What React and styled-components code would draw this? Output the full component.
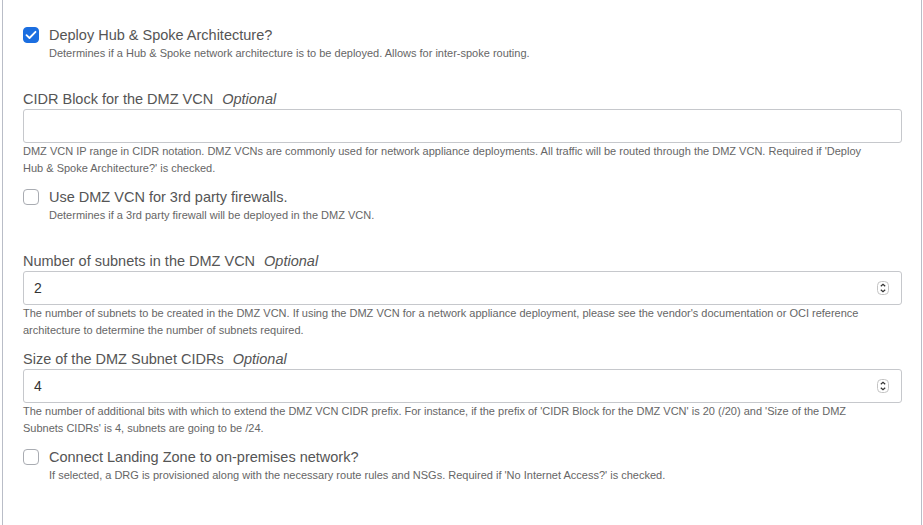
import React from "react";
import styled, { createGlobalStyle } from "styled-components";

const Global = createGlobalStyle`
  html, body { margin: 0; padding: 0; background: #fff; }
  body { font-family: "Liberation Sans", Arial, Helvetica, sans-serif; }
  * { box-sizing: border-box; }
`;

const Panel = styled.div`
  margin-left: 2px;
  width: 920px;
  min-height: 100vh;
  border-left: 1px solid #b9bdc7;
  border-right: 1px solid #b9bdc7;
  padding: 25px 19px 0 20px;
`;

const CheckBlock = styled.div`
  margin-bottom: ${(p) => p.$mb ?? 10}px;
`;

const CheckRow = styled.label`
  display: flex;
  align-items: center;
  gap: 10px;
  height: 20px;
`;

const Box = styled.span`
  width: 16px;
  height: 16px;
  border-radius: 4px;
  flex: none;
  display: flex;
  align-items: center;
  justify-content: center;
  background: ${(p) => (p.$checked ? "#1b6ee0" : "#fff")};
  border: 1px solid ${(p) => (p.$checked ? "#1b6ee0" : "#a9acb2")};
`;

const CheckLabel = styled.span`
  font-size: 14.5px;
  color: #555;
  line-height: 20px;
`;

const CheckDesc = styled.div`
  margin-left: 26px;
  font-size: 11px;
  line-height: 17px;
  color: #666;
`;

const Field = styled.div`
  margin-bottom: 10px;
`;

const FieldLabel = styled.div`
  font-size: 14.5px;
  line-height: 20px;
  color: #555;
  display: flex;
  gap: 9px;
`;

const Opt = styled.span`
  font-style: italic;
`;

const InputBox = styled.div`
  height: 34px;
  border: 1px solid #c6c8cc;
  border-radius: 3px;
  display: flex;
  align-items: center;
  justify-content: space-between;
  padding: 0 12px 0 10px;
  font-size: 14px;
  color: #333;
`;

const Help = styled.div`
  max-width: 850px;
  font-size: 11px;
  line-height: 17px;
  color: #666;
`;

const Check = () => (
  <svg width="12" height="10" viewBox="0 0 12 10">
    <path d="M1.5 5.2 L4.5 8 L10.5 1.8" fill="none" stroke="#fff" strokeWidth="1.8" strokeLinecap="round" strokeLinejoin="round" />
  </svg>
);

const Spinner = () => (
  <svg width="12" height="14" viewBox="0 0 12 14">
    <rect x="0.5" y="0.5" width="11" height="13" rx="4" fill="#fff" stroke="#c4c4c4" />
    <path d="M3.8 5.2 L6 3.2 L8.2 5.2" fill="none" stroke="#333" strokeWidth="1.2" />
    <path d="M3.8 8.8 L6 10.8 L8.2 8.8" fill="none" stroke="#333" strokeWidth="1.2" />
  </svg>
);

const CheckItem = ({ checked, label, desc, mb }) => (
  <CheckBlock $mb={mb}>
    <CheckRow>
      <Box $checked={checked}>{checked && <Check />}</Box>
      <CheckLabel>{label}</CheckLabel>
    </CheckRow>
    <CheckDesc>{desc}</CheckDesc>
  </CheckBlock>
);

const TextField = ({ label, value, spinner, help }) => (
  <Field>
    <FieldLabel>
      {label}
      <Opt>Optional</Opt>
    </FieldLabel>
    <InputBox>
      <span>{value}</span>
      {spinner && <Spinner />}
    </InputBox>
    <Help>{help}</Help>
  </Field>
);

export default function App() {
  return (
    <>
      <Global />
      <Panel>
        <CheckItem
          checked
          mb={27}
          label="Deploy Hub & Spoke Architecture?"
          desc="Determines if a Hub & Spoke network architecture is to be deployed. Allows for inter-spoke routing."
        />
        <TextField
          label="CIDR Block for the DMZ VCN"
          help="DMZ VCN IP range in CIDR notation. DMZ VCNs are commonly used for network appliance deployments. All traffic will be routed through the DMZ VCN. Required if 'Deploy Hub & Spoke Architecture?' is checked."
        />
        <CheckItem
          mb={27}
          label="Use DMZ VCN for 3rd party firewalls."
          desc="Determines if a 3rd party firewall will be deployed in the DMZ VCN."
        />
        <TextField
          label="Number of subnets in the DMZ VCN"
          value="2"
          spinner
          help="The number of subnets to be created in the DMZ VCN. If using the DMZ VCN for a network appliance deployment, please see the vendor's documentation or OCI reference architecture to determine the number of subnets required."
        />
        <TextField
          label="Size of the DMZ Subnet CIDRs"
          value="4"
          spinner
          help="The number of additional bits with which to extend the DMZ VCN CIDR prefix. For instance, if the prefix of 'CIDR Block for the DMZ VCN' is 20 (/20) and 'Size of the DMZ Subnets CIDRs' is 4, subnets are going to be /24."
        />
        <CheckItem
          label="Connect Landing Zone to on-premises network?"
          desc="If selected, a DRG is provisioned along with the necessary route rules and NSGs. Required if 'No Internet Access?' is checked."
        />
      </Panel>
    </>
  );
}
